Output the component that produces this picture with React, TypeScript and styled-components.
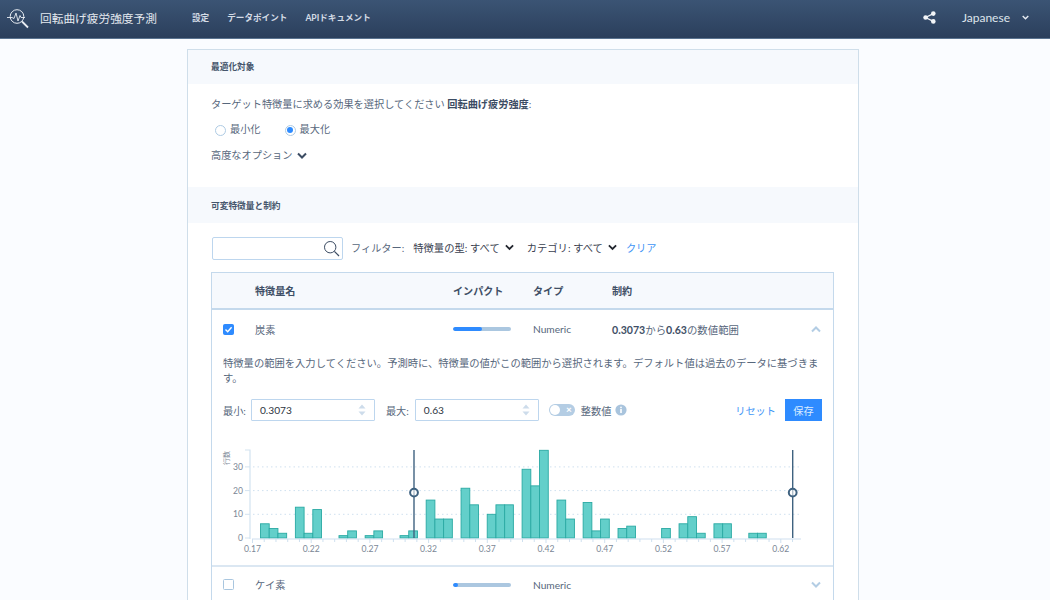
import React from "react";
import styled, { createGlobalStyle } from "styled-components";

const Global = createGlobalStyle`
  html, body { margin: 0; padding: 0; height: 600px; overflow: hidden; background: #fafcff; }
  body { font-family: "Lato", "Noto Sans CJK JP", sans-serif; color: #3f5068; font-size: 10.5px; }
  #root { height: 600px; overflow: hidden; }
  * { box-sizing: border-box; }
`;

const Header = styled.header`
  height: 39px; display: flex; align-items: center; padding: 0 21px 0 7px;
  background: linear-gradient(#3b5474, #2b3f5c); border-bottom: 1px solid #5a7390;
  color: #e6ebf1;
`;
const Title = styled.div`font-size: 11.7px; margin-left: 7px; width: 152px; line-height: 36px; padding-bottom: 3px; color: #e4e9ef;`;
const NavItem = styled.span`font-size: 8.6px; font-weight: 700; margin-right: 18px; color: #d4dce6; padding-bottom: 4px;`;
const HeaderRight = styled.div`margin-left: auto; display: flex; align-items: center; color: #eef2f6; padding-bottom: 3px;`;
const Lang = styled.span`font-size: 12px; margin: 0 12px 0 26px; color: #dfe5ec;`;

const Card = styled.main`
  width: 672px; margin: 10px 0 0 187px; background: #fff; border: 1px solid #cfdeea; border-bottom: 0; height: 600px;
`;
const SectionHead = styled.div<{ $h: number; $pb?: number }>`
  height: ${(p) => p.$h}px; padding: 0 0 ${(p) => p.$pb ?? 0}px 23px; background: #f6f9fd; display: flex; align-items: center;
  font-size: 8.7px; font-weight: 700; color: #46566c;
`;
const Objective = styled.section`height: 103px; padding: 12px 23px 0; line-height: 16px;`;
const Prompt = styled.div`font-size: 10.2px; color: #57677c; b { color: #3c4c63; font-weight: 700; }`;
const Radios = styled.div`display: flex; padding: 9px 0 0 4px; gap: 24px;`;
const RadioLabel = styled.label`display: flex; align-items: center; gap: 4px; font-size: 10.2px; color: #57677c;`;
const RadioDot = styled.span<{ $on?: boolean }>`
  width: 11px; height: 11px; border-radius: 50%; border: 1.2px solid #aecbe4; background: #fff;
  margin-top: 2px; display: flex; align-items: center; justify-content: center;
  &::after { content: ""; width: 6px; height: 6px; border-radius: 50%; background: ${(p) => (p.$on ? "#2e8bff" : "transparent")}; }
`;
const Advanced = styled.div`display: flex; align-items: center; gap: 4px; margin-top: 10px; font-size: 10.2px; color: #57677c;`;

const Filters = styled.div`display: flex; align-items: center; padding: 14px 23px 0 24px; height: 37px;`;
const SearchBox = styled.div`
  width: 131px; height: 23px; border: 1px solid #bdd6ee; border-radius: 2px; background: #fff;
  display: flex; align-items: center; justify-content: flex-end; padding-right: 2px; color: #3c4c63; margin-right: 8px;
`;
const FilterLabel = styled.span`font-size: 10.2px; color: #57677c; margin: 0 9px 2px 0;`;
const FilterPick = styled.span`display: flex; align-items: center; gap: 5px; font-size: 10.3px; color: #3a4150; margin: 0 13px 2px 0;`;
const TextLink = styled.span`font-size: 10.2px; color: #3f95f6; margin: 0 0 2px -4px;`;

const Table = styled.div`margin: 12px 24px 0 23px; border: 1px solid #c4d9ec; border-bottom: 0;`;
const gridCols = "43px 198px 80px 79px 1fr 22px";
const HeadRow = styled.div`
  display: grid; grid-template-columns: ${gridCols}; height: 37px; align-items: center;
  background: #f6f9fd; border-bottom: 2px solid #c4d9ec; font-size: 10.1px; font-weight: 700; color: #3f4f66;
`;
const Row = styled.div<{ $h?: number }>`
  display: grid; grid-template-columns: ${gridCols}; height: ${(p) => p.$h ?? 38}px; align-items: center;
  font-size: 10.2px; color: #57677c;
`;
const CheckCell = styled.div`padding-left: 11px; display: flex;`;
const Check = styled.span<{ $on?: boolean }>`
  width: 11px; height: 11px; border-radius: 1.5px; display: flex; align-items: center; justify-content: center;
  background: ${(p) => (p.$on ? "#2e8bff" : "#fff")}; border: 1.3px solid ${(p) => (p.$on ? "#2e8bff" : "#a9c6df")};
`;
const Bar = styled.div`width: 58px; height: 4px; border-radius: 2px; background: #abc7e0; overflow: hidden;`;
const BarFill = styled.div`height: 100%; background: #2e8bff; border-radius: 2px;`;
const Constraint = styled.div`font-size: 10.4px; color: #57677c; b { font-weight: 700; color: #3f4f66; font-size: 10.6px; }`;
const Detail = styled.div`padding: 9px 11px 0; height: 220px; border-bottom: 2px solid #dbe7f2; margin-top: -1px;`;
const DetailText = styled.p`margin: 0; font-size: 10.3px; line-height: 15px; color: #57677c;`;
const Controls = styled.div`display: flex; align-items: center; height: 22px; margin-top: 13px;`;
const FieldLabel = styled.span<{ $mr?: number }>`font-size: 10.2px; color: #57677c; margin-right: ${(p) => p.$mr ?? 5}px;`;
const NumField = styled.div`
  width: 124px; height: 22px; border: 1px solid #bdd6ee; border-radius: 1px; display: flex; align-items: center;
  justify-content: space-between; padding: 0 8px; font-size: 10.2px; color: #2d3440; margin-right: 11px;
`;
const Toggle = styled.span`
  width: 26px; height: 12px; border-radius: 6px; background: #b4cde4; position: relative; display: block; margin: 0 6px 0 -1px;
  &::before { content: ""; position: absolute; left: 1px; top: 1px; width: 10px; height: 10px; border-radius: 50%; background: #fff; }
`;
const ToggleX = styled.span`position: absolute; right: 3px; top: -1px; font-size: 10px; font-weight: 900; line-height: 13px; color: #fff;`;
const InfoSvg = styled.svg`margin-left: 4px;`;
const Reset = styled.span`margin-left: auto; font-size: 10.2px; color: #3f95f6; margin-right: 9px;`;
const Save = styled.button`
  width: 37px; height: 22px; border: 0; background: #2e8bff; color: #d9ebff; font: inherit; font-size: 10.2px; padding: 0;
`;
const ChartWrap = styled.div`margin: 23px 0 0 -11px;`;
const ChartSvg = styled.svg`display: block; font-family: "Lato", "Noto Sans CJK JP", sans-serif;`;

const Chevron = ({ color, up, size = 10 }: { color: string; up?: boolean; size?: number }) => (
  <svg width={size} height={size * 0.7} viewBox="0 0 10 7">
    <polyline points={up ? "1,5.5 5,1.5 9,5.5" : "1,1.5 5,5.5 9,1.5"} fill="none" stroke={color} strokeWidth="2" />
  </svg>
);

const Logo = () => (
  <svg width="26" height="28" viewBox="0 0 26 28" fill="none" stroke="#e8edf3" strokeWidth="1">
    <circle cx="10" cy="11.5" r="6.8" />
    <polyline points="0,12.5 5,12.5 7,13.5 9,8 11,16 13,10.5 14,12.5 18,12.5" strokeWidth="0.9" />
    <line x1="15" y1="16.5" x2="21" y2="22.5" strokeWidth="1.8" />
  </svg>
);

const Share = () => (
  <svg width="13" height="13" viewBox="0 0 13 13" fill="#f2f5f8">
    <circle cx="10.3" cy="2.6" r="2.3" /><circle cx="10.3" cy="10.4" r="2.3" /><circle cx="2.6" cy="6.5" r="2.3" />
    <polyline points="10.3,2.6 2.6,6.5 10.3,10.4" fill="none" stroke="#f2f5f8" strokeWidth="1.2" />
  </svg>
);

const SearchIcon = () => (
  <svg width="17" height="17" viewBox="0 0 17 17" fill="none" stroke="#3c4c63" strokeWidth="1">
    <circle cx="7.2" cy="7.2" r="5.7" /><line x1="11.4" y1="11.4" x2="16" y2="16" strokeWidth="1.2" />
  </svg>
);

const Tick = () => (
  <svg width="9" height="9" viewBox="0 0 9 9"><polyline points="1.5,4.5 3.7,6.7 7.6,2.2" fill="none" stroke="#fff" strokeWidth="1.4" /></svg>
);

const Spinner = () => (
  <svg width="8" height="12" viewBox="0 0 8 12" fill="#cddceb">
    <polygon points="4,0.5 7.5,4.5 0.5,4.5" /><polygon points="0.5,7.5 7.5,7.5 4,11.5" />
  </svg>
);

const InfoIcon = () => (
  <InfoSvg width="12" height="12" viewBox="0 0 12 12">
    <circle cx="6" cy="6" r="5.6" fill="#a9c4dd" />
    <rect x="5.2" y="5" width="1.6" height="4" fill="#fff" /><rect x="5.2" y="2.7" width="1.6" height="1.5" fill="#fff" />
  </InfoSvg>
);

// chart: origin of the svg is page x=212, y=444
const OX = 212, OY = 444;
const bars: [number, number][] = [
  [0,6],[1,4],[2,2],[4,13],[5,2],[6,12],[9,1],[10,3],[12,1],[13,3],[16,1],[17,3],[19,16],[20,8],[21,8],
  [23,21],[24,14],[26,10],[27,14],[28,14],[30,29],[31,22],[32,37],[34,16],[35,8],[37,15],[38,3],[39,8],
  [41,4],[42,5],[46,4],[48,6],[49,9],[50,2],[52,6],[53,6],[56,2],[57,2],
];
const xTicks = ["0.17","0.22","0.27","0.32","0.37","0.42","0.47","0.52","0.57","0.62"];
const y0 = 538 - OY, unit = 2.37;

const Histogram = () => (
  <ChartSvg width="600" height="118" viewBox="0 0 600 118">
    {[10, 20, 30].map((v) => (
      <line key={v} x1={253 - OX} x2={801 - OX} y1={y0 - v * unit} y2={y0 - v * unit} stroke="#cfe0ef" strokeWidth="1" strokeDasharray="1.5 3" />
    ))}
    <polyline points={`${245 - OX},${450 - OY} ${250 - OX},${450 - OY} ${250 - OX},${539 - OY}`} fill="none" stroke="#d3e3f0" strokeWidth="1.2" />
    {[0, 10, 20, 30].map((v) => (
      <g key={v}>
        <line x1={245 - OX} x2={250 - OX} y1={y0 - v * unit} y2={y0 - v * unit} stroke="#d3e3f0" />
        <text x={243 - OX} y={y0 - v * unit + 3} textAnchor="end" fontSize="8.6" fill="#7b8796">{v}</text>
      </g>
    ))}
    <text transform={`translate(${229 - OX},${458 - OY}) rotate(-90)`} textAnchor="middle" fontSize="7" fill="#7b8796">行数</text>
    {bars.map(([i, v]) => (
      <rect key={i} x={260 - OX + 8.72 * i + 0.5} y={y0 - v * unit} width="8.72" height={v * unit} fill="#63cfca" stroke="#2aa9a3" strokeWidth="0.9" />
    ))}
    <line x1={252 - OX} x2={801 - OX} y1={y0 + 1} y2={y0 + 1} stroke="#cfe0ef" strokeWidth="1.2" />
    {Array.from({ length: 47 }, (_, i) => (
      <line key={i} x1={252.5 - OX + i * 11.74} x2={252.5 - OX + i * 11.74} y1={y0 + 1} y2={y0 + (i % 5 === 0 ? 5 : 4)} stroke="#cfe0ef" />
    ))}
    {xTicks.map((t, i) => (
      <text key={t} x={252.5 - OX + i * 58.7} y={552 - OY} textAnchor="middle" fontSize="8.6" fill="#7b8796">{t}</text>
    ))}
    {[414, 792.7].map((x) => (
      <g key={x}>
        <line x1={x - OX} x2={x - OX} y1={450 - OY} y2={538 - OY} stroke="#3f6280" strokeWidth="1.4" />
        <circle cx={x - OX} cy={492.6 - OY} r="3.9" fill="#fff" fillOpacity="0.6" stroke="#3f6280" strokeWidth="2" />
      </g>
    ))}
  </ChartSvg>
);

export default function App() {
  return (
    <>
      <Global />
      <Header>
        <Logo />
        <Title>回転曲げ疲労強度予測</Title>
        <NavItem>設定</NavItem>
        <NavItem>データポイント</NavItem>
        <NavItem>APIドキュメント</NavItem>
        <HeaderRight>
          <Share />
          <Lang>Japanese</Lang>
          <Chevron color="#e8edf3" size={7} />
        </HeaderRight>
      </Header>
      <Card>
        <SectionHead $h={34} $pb={2}>最適化対象</SectionHead>
        <Objective>
          <Prompt>ターゲット特徴量に求める効果を選択してください <b>回転曲げ疲労強度</b>:</Prompt>
          <Radios>
            <RadioLabel><RadioDot />最小化</RadioLabel>
            <RadioLabel><RadioDot $on />最大化</RadioLabel>
          </Radios>
          <Advanced>高度なオプション <Chevron color="#3c4c63" /></Advanced>
        </Objective>
        <SectionHead $h={36}>可変特徴量と制約</SectionHead>
        <Filters>
          <SearchBox><SearchIcon /></SearchBox>
          <FilterLabel>フィルター:</FilterLabel>
          <FilterPick>特徴量の型: すべて <Chevron color="#22262e" size={9} /></FilterPick>
          <FilterPick>カテゴリ: すべて <Chevron color="#22262e" size={9} /></FilterPick>
          <TextLink>クリア</TextLink>
        </Filters>
        <Table>
          <HeadRow>
            <span />
            <span>特徴量名</span>
            <span>インパクト</span>
            <span>タイプ</span>
            <span>制約</span>
            <span />
          </HeadRow>
          <Row>
            <CheckCell><Check $on><Tick /></Check></CheckCell>
            <span>炭素</span>
            <Bar><BarFill style={{ width: "50%" }} /></Bar>
            <span>Numeric</span>
            <Constraint><b>0.3073</b>から<b>0.63</b>の数値範囲</Constraint>
            <Chevron color="#b3cde4" up />
          </Row>
          <Detail>
            <DetailText>特徴量の範囲を入力してください。予測時に、特徴量の値がこの範囲から選択されます。デフォルト値は過去のデータに基づきます。</DetailText>
            <Controls>
              <FieldLabel>最小:</FieldLabel>
              <NumField>0.3073<Spinner /></NumField>
              <FieldLabel $mr={6}>最大:</FieldLabel>
              <NumField>0.63<Spinner /></NumField>
              <Toggle><ToggleX>×</ToggleX></Toggle>
              <FieldLabel $mr={0}>整数値</FieldLabel>
              <InfoIcon />
              <Reset>リセット</Reset>
              <Save>保存</Save>
            </Controls>
            <ChartWrap><Histogram /></ChartWrap>
          </Detail>
          <Row $h={35}>
            <CheckCell><Check /></CheckCell>
            <span>ケイ素</span>
            <Bar><BarFill style={{ width: "8%" }} /></Bar>
            <span>Numeric</span>
            <span />
            <Chevron color="#b3cde4" />
          </Row>
        </Table>
      </Card>
    </>
  );
}
